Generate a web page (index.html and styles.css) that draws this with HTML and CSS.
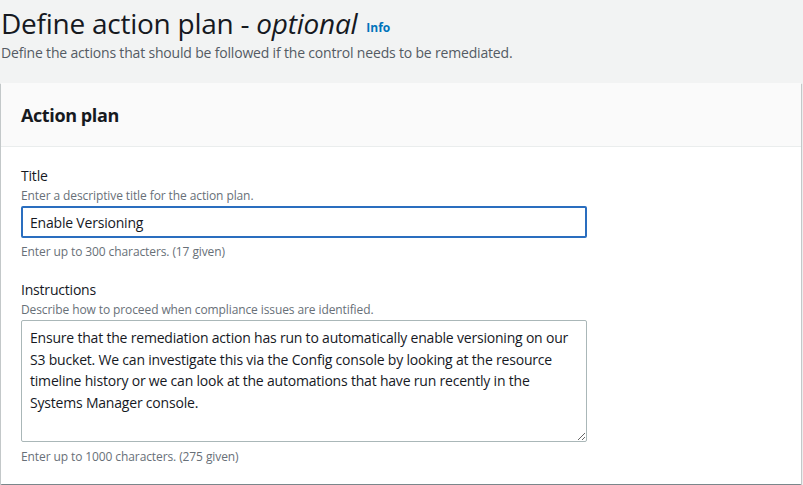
FILE: index.html
```html
<!DOCTYPE html>
<html lang="en">
<head>
<meta charset="utf-8">
<title>Define action plan</title>
<link rel="stylesheet" href="styles.css">
</head>
<body>
<header class="page-header">
  <h1 class="page-title">Define action plan - <em>optional</em> <a class="info" href="#">Info</a></h1>
  <p class="page-desc">Define the actions that should be followed if the control needs to be remediated.</p>
</header>
<section class="card">
  <div class="card-header"><h2>Action plan</h2></div>
  <div class="card-body">
    <div class="field">
      <label class="label" for="t">Title</label>
      <div class="desc">Enter a descriptive title for the action plan.</div>
      <input id="t" class="input" type="text" value="Enable Versioning">
      <div class="constraint">Enter up to 300 characters. (17 given)</div>
    </div>
    <div class="field">
      <label class="label" for="i">Instructions</label>
      <div class="desc">Describe how to proceed when compliance issues are identified.</div>
      <textarea id="i" class="textarea">Ensure that the remediation action has run to automatically enable versioning on our S3 bucket. We can investigate this via the Config console by looking at the resource timeline history or we can look at the automations that have run recently in the Systems Manager console.</textarea>
      <div class="constraint constraint-ta">Enter up to 1000 characters. (275 given)</div>
    </div>
  </div>
</section>
</body>
</html>
```
FILE: styles.css
```css
* { box-sizing: border-box; }
body {
  margin: 0;
  background: #f2f3f3;
  font-family: "Open Sans", "Noto Sans", sans-serif;
  color: #16191f;
  width: 803px;
  height: 485px;
  overflow: hidden;
}
.page-header { padding: 0 0 0 1px; }
.page-title {
  margin: 9px 0 0;
  font-size: 28px;
  line-height: 28px;
  height: 28px;
  font-weight: 400;
  letter-spacing: -0.25px;
}
.page-title em { font-style: italic; }
.info {
  font-size: 12px;
  line-height: 1;
  font-weight: 700;
  color: #0073bb;
  text-decoration: none;
  letter-spacing: 0;
  margin-left: 2px;
  vertical-align: 2px;
}
.page-desc {
  margin: 6px 0 0;
  font-size: 14px;
  line-height: 20px;
  color: #545b64;
  letter-spacing: -0.18px;
}
.card {
  margin: 20px 2px 0 1px;
  background: #fff;
  box-shadow: 0 1px 1px 0 rgba(0,28,36,.3), 1px 1px 1px 0 rgba(0,28,36,.15), -1px 1px 1px 0 rgba(0,28,36,.15);
}
.card-header {
  background: #fafafa;
  border-bottom: 1px solid #eaeded;
  height: 64px;
  padding: 0 20px;
  display: flex;
  align-items: center;
}
.card-header h2 {
  margin: 0;
  font-size: 18px;
  font-weight: 700;
  line-height: 22px;
  letter-spacing: -0.4px;
}
.card-body { padding: 18px 20px 19px; }
.field { display: flex; flex-direction: column; }
.field + .field { margin-top: 19px; }
.label { font-size: 14px; line-height: 22px; letter-spacing: -0.2px; }
.desc { margin-top: 1px; font-size: 12px; line-height: 16px; color: #687078; letter-spacing: -0.1px; }
.input {
  margin-top: 2px;
  width: 566px;
  height: 32px;
  border: 2px solid #2a6ebf;
  border-radius: 2px;
  padding: 0 7px;
  font: inherit;
  font-size: 14px;
  letter-spacing: -0.2px;
  color: #16191f;
  outline: none;
  background: #fff;
}
.textarea {
  margin-top: 2px;
  width: 566px;
  height: 122px;
  border: 1px solid #aab7b8;
  border-radius: 2px;
  padding: 6px 8px 4px;
  font: inherit;
  font-size: 14px;
  line-height: 21.7px;
  letter-spacing: -0.2px;
  color: #16191f;
  resize: vertical;
  outline: none;
}
.constraint {
  margin-top: 6px;
  font-size: 12px;
  line-height: 16px;
  color: #687078;
  letter-spacing: -0.1px;
}
.constraint-ta { margin-top: 7px; }
```
